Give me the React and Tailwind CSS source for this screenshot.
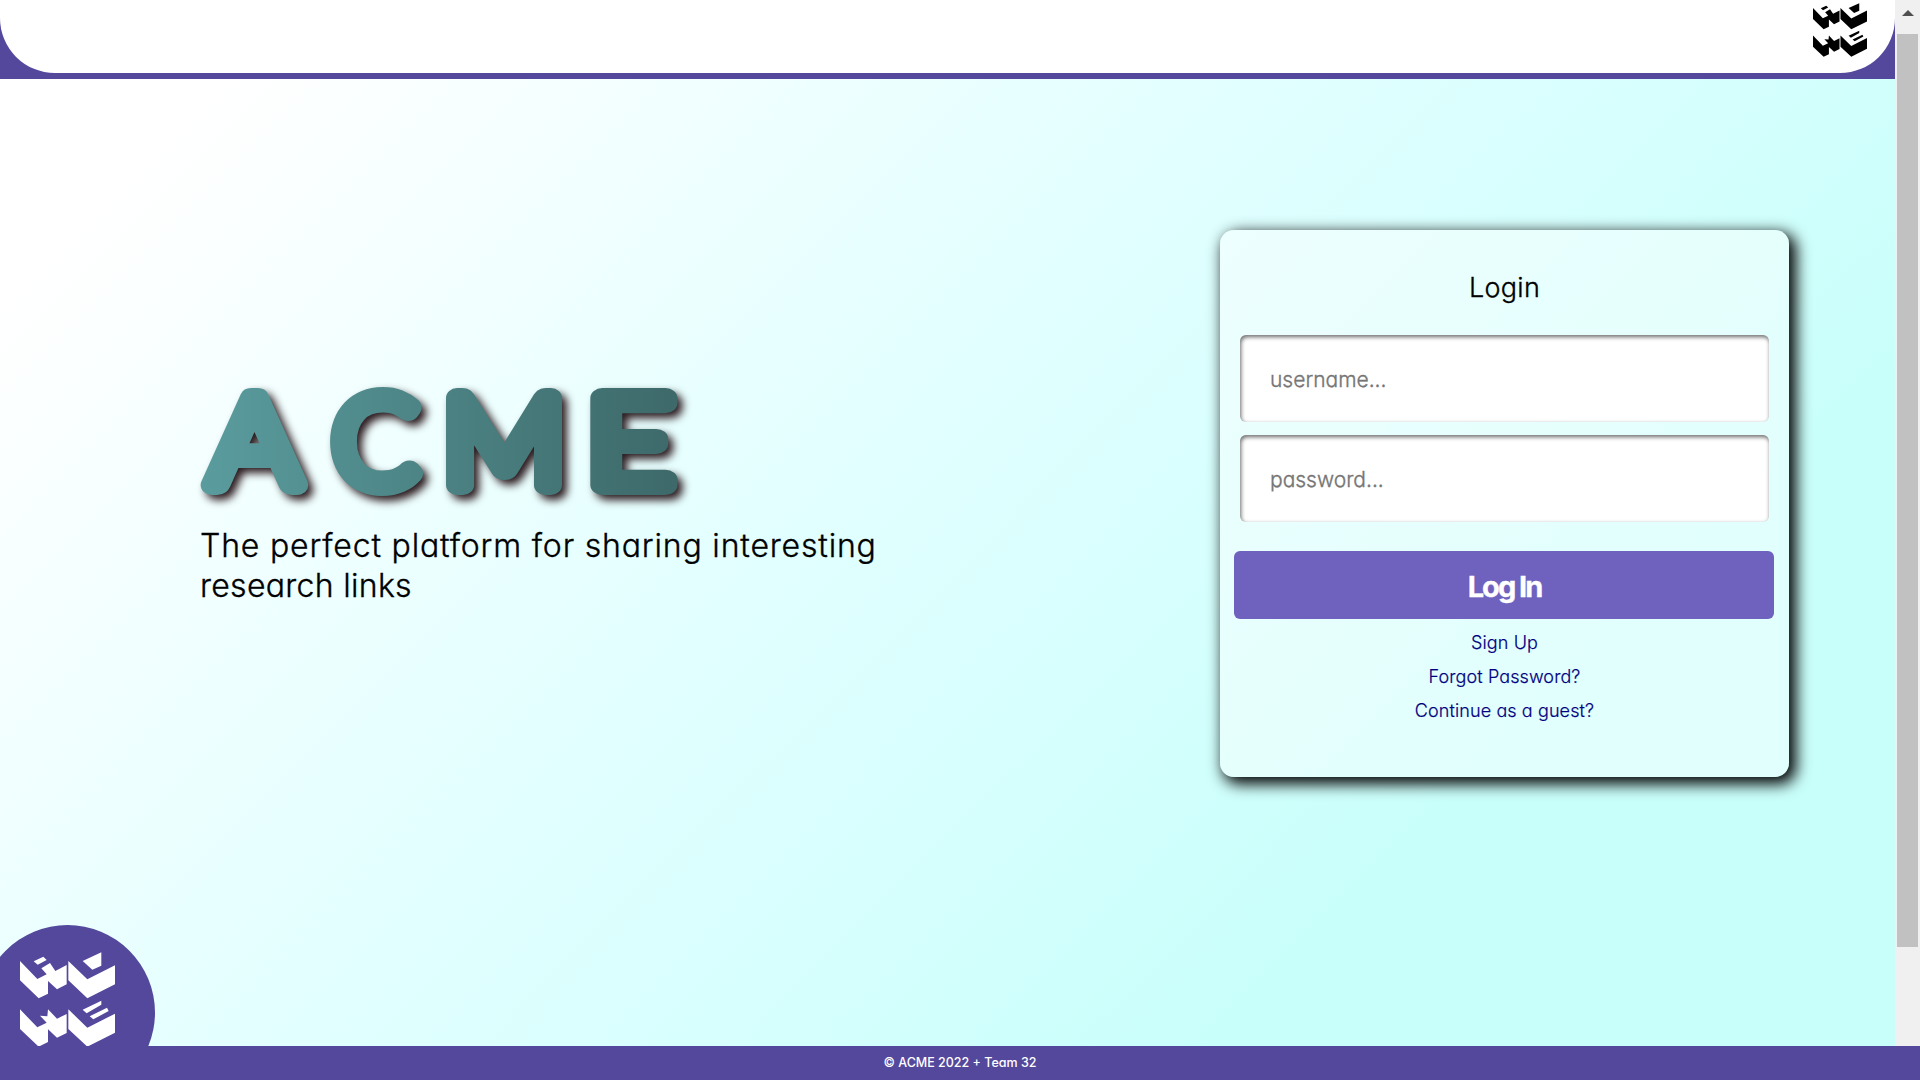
const sans = "font-['Inter','Noto_Sans',sans-serif] [font-feature-settings:'cv11']";

function Logo({ className }) {
  return (
    <svg viewBox="60 126 285 283" className={className} fill="currentColor" aria-hidden="true">
      <path d="M60 152 112 206 140 192 124 174 150 158 166 182 200 164V222L171 237 144 212V250L116 264 60 210Z" />
      <path d="M101 153 130 139 140 149 113 163Z" />
      <path d="M205 152 262 207 345 165V222L262 264 205 210Z" />
      <path d="M248 152 304 126V166L277 178Z" />
      <path d="M60 297 112 351 140 337 120 316 142 318 144 297 171 325 200 311V368L171 382 144 357V395L116 409 60 356Z" />
      <path d="M205 297 262 352 345 310V367L262 409 205 356Z" />
      <path d="M248 298 304 271V283L260 309Z" />
      <path d="M269 318 321 292 326 302 280 327Z" />
    </svg>
  );
}

function Wordmark() {
  return (
    <svg className="block h-[140px] w-[520px] overflow-visible [filter:drop-shadow(5px_5px_4px_#2a1a1e)]" viewBox="0 0 520 140" role="img" aria-label="ACME">
      <defs>
        <linearGradient id="teal" gradientUnits="userSpaceOnUse" x1="0" y1="0" x2="720" y2="0">
          <stop offset="0" stopColor="#5a9c9e" />
          <stop offset="1" stopColor="#2f4f4f" />
        </linearGradient>
      </defs>
      <g fill="url(#teal)" stroke="url(#teal)" strokeWidth="20" strokeLinejoin="round" fontFamily="Lato, sans-serif" fontWeight="300" fontSize="122">
        <text x="10" y="108" textLength="89" lengthAdjust="spacingAndGlyphs">A</text>
        <text x="133" y="108" textLength="84" lengthAdjust="spacingAndGlyphs">C</text>
        <text x="243" y="108" textLength="122" lengthAdjust="spacingAndGlyphs">M</text>
        <text x="387" y="108" textLength="86" lengthAdjust="spacingAndGlyphs">E</text>
      </g>
    </svg>
  );
}

function Field({ type, placeholder }) {
  return (
    <input
      type={type}
      placeholder={placeholder}
      className="block h-[87px] w-[529px] rounded-[6px] bg-white px-[30px] pt-[2px] text-[21px] outline-none placeholder:text-[#757575] placeholder:opacity-100 shadow-[inset_1px_2px_4px_rgba(0,0,0,0.6)]"
    />
  );
}

export default function App() {
  return (
    <div className={`flex h-[1080px] w-[1920px] flex-col overflow-hidden font-light text-black [-webkit-text-stroke:0.35px] ${sans}`}>
      <div className="flex h-[1046px]">
        <div className="flex w-[1895px] flex-col">
          <header className="h-[79px] bg-[#54489d]">
            <div className="flex h-[73px] justify-end rounded-b-[55px] bg-white pr-[28px] pt-[3px]">
              <Logo className="h-[54px] w-[54px] text-black" />
            </div>
          </header>
          <main className="relative flex h-[967px] justify-between overflow-hidden bg-[linear-gradient(135deg,#ffffff_8%,#e0ffff_46%,#c9fffb_76%)]">
            <div className="ml-[200px] w-[720px] pt-[298px]">
              <Wordmark />
              <p className="mt-[9px] whitespace-nowrap text-[32px] leading-[40px]">
                <span className="tracking-[0.82px]">The perfect platform for sharing interesting</span>
                <br />
                <span className="tracking-[0.3px]">research links</span>
              </p>
            </div>
            <form className="mr-[106px] mt-[151px] flex h-[547px] w-[569px] flex-col items-center rounded-[14px] bg-white/45 shadow-[5px_5px_15px_2px_#000]">
              <h2 className="mt-[38px] text-[27px] leading-[40px] tracking-[0.3px]">Login</h2>
              <div className="mt-[27px] flex flex-col gap-[13px]">
                <Field type="text" placeholder="username..." />
                <Field type="password" placeholder="password..." />
              </div>
              <button type="button" className="mr-[2px] mt-[29px] h-[68px] w-[540px] rounded-[6px] bg-[#6f61be] pl-[2px] pt-[4px] text-[29px] font-bold tracking-[-2px] text-white">Log In</button>
              <nav className="mt-[7px] flex flex-col items-center text-[18px] leading-[34px] tracking-[0.1px] text-[#000080] [-webkit-text-stroke:0.2px]">
                <a>Sign Up</a>
                <a>Forgot Password?</a>
                <a>Continue as a guest?</a>
              </nav>
            </form>
            <div className="absolute -left-[20px] top-[846px] h-[175px] w-[175px] rounded-full bg-[#54489d] pl-[40px] pt-[27px]">
              <Logo className="h-[95px] w-[95px] text-white" />
            </div>
          </main>
        </div>
        <div className="flex w-[25px] flex-col items-center bg-[#f0f0f0]">
          <svg viewBox="0 0 12 6" className="mt-[10px] h-[6px] w-[12px]" fill="#505050"><path d="M0 6 6 0 12 6Z" /></svg>
          <div className="mt-[18px] h-[913px] w-[21px] bg-[#c1c1c1]" />
        </div>
      </div>
      <footer className="flex h-[34px] items-center justify-center bg-[#54489d] text-[12.5px] font-medium text-white [-webkit-text-stroke:0px]">© ACME 2022 + Team 32</footer>
    </div>
  );
}
